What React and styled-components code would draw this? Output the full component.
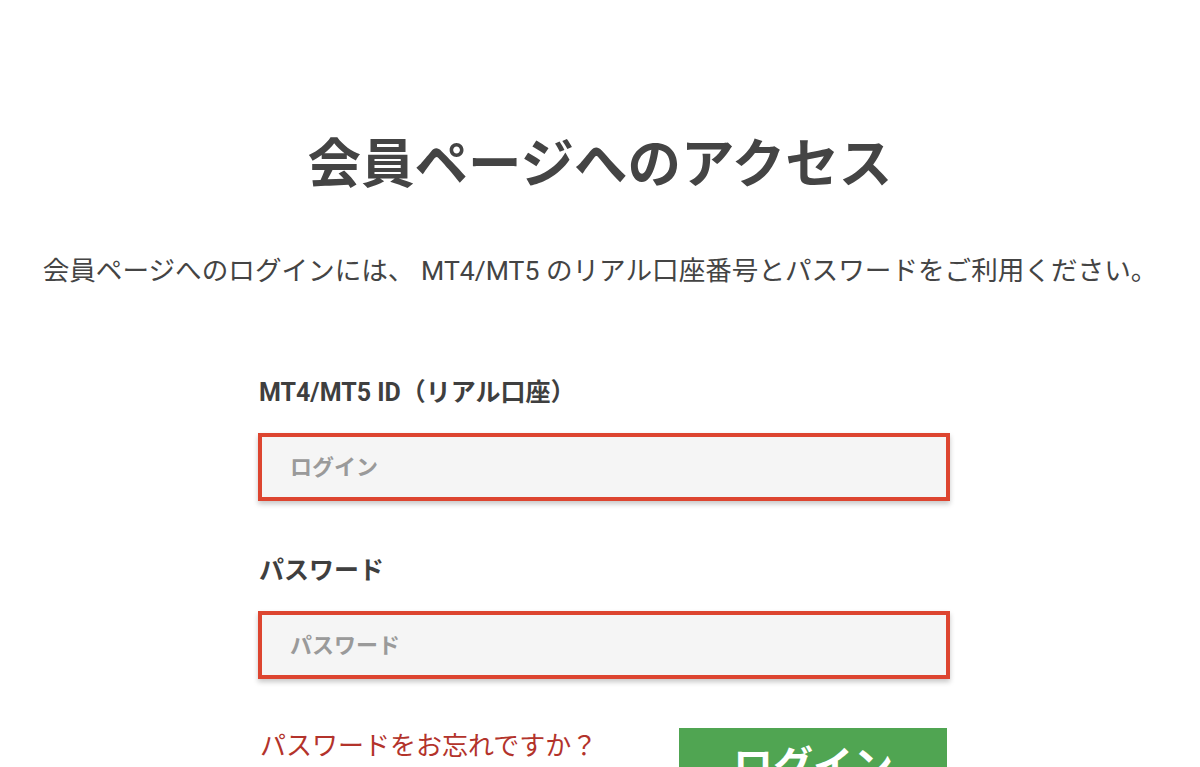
import React from 'react';
import styled, { createGlobalStyle } from 'styled-components';

const GlobalStyle = createGlobalStyle`
  html, body {
    margin: 0;
    padding: 0;
    background: #ffffff;
  }
  body {
    font-family: Roboto, "Noto Sans CJK JP", sans-serif;
    color: #444444;
    overflow: hidden;
  }
`;

const Page = styled.div`
  width: 1200px;
  height: 767px;
  overflow: hidden;
  padding-top: 133px;
  box-sizing: border-box;
`;

const Title = styled.h1`
  margin: 0;
  font-size: 53.5px;
  line-height: 64px;
  font-weight: 700;
  text-align: center;
  color: #444444;
`;

const Lead = styled.p`
  margin: 56px 0 0;
  font-size: 26.6px;
  line-height: 36px;
  text-align: center;
  color: #444444;
`;

const Form = styled.form`
  width: 692px;
  margin: 87px 0 0 258px;
  display: flex;
  flex-direction: column;
`;

const Label = styled.label`
  display: block;
  font-size: 25px;
  line-height: 34px;
  font-weight: 700;
  color: #3f3f3f;
  margin-top: ${p => (p.$first ? '0' : '53px')};
  padding-left: 1px;
`;

const Input = styled.input`
  margin-top: 23px;
  height: 68px;
  box-sizing: border-box;
  border: 4px solid #dd4530;
  background: #f5f5f5;
  box-shadow: 0 3px 5px rgba(0, 0, 0, 0.22);
  padding: 0 0 0 28px;
  font-family: Roboto, "Noto Sans CJK JP", sans-serif;
  font-size: 22px;
  font-weight: 700;
  outline: none;
  &::placeholder {
    color: #9a9a9a;
  }
`;

const Actions = styled.div`
  margin-top: 49px;
  display: flex;
  justify-content: space-between;
  align-items: flex-start;
`;

const Forgot = styled.a`
  font-size: 26px;
  line-height: 36px;
  color: #b3332b;
  text-decoration: none;
  margin-top: 0;
  padding-left: 2px;
`;

const LoginButton = styled.button`
  width: 268px;
  height: 70px;
  border: none;
  background: #50a552;
  color: #ffffff;
  font-family: Roboto, "Noto Sans CJK JP", sans-serif;
  font-size: 40px;
  font-weight: 700;
  margin-right: 3px;
  cursor: pointer;
`;

export default function App() {
  return (
    <Page>
      <GlobalStyle />
      <Title>会員ページへのアクセス</Title>
      <Lead>会員ページへのログインには、 MT4/MT5 のリアル口座番号とパスワードをご利用ください。</Lead>
      <Form onSubmit={e => e.preventDefault()}>
        <Label $first>MT4/MT5 ID（リアル口座）</Label>
        <Input placeholder="ログイン" />
        <Label>パスワード</Label>
        <Input type="password" placeholder="パスワード" />
        <Actions>
          <Forgot href="#">パスワードをお忘れですか？</Forgot>
          <LoginButton type="submit">ログイン</LoginButton>
        </Actions>
      </Form>
    </Page>
  );
}
